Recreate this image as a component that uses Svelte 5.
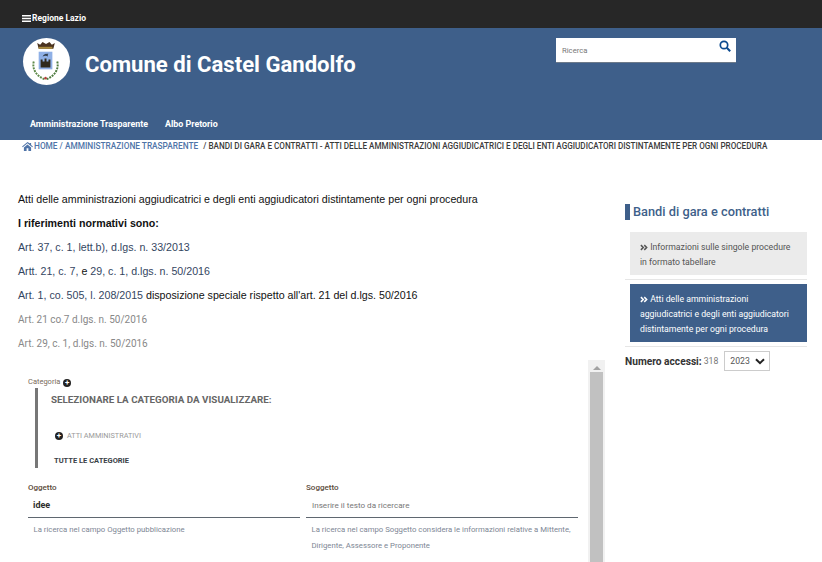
<script>
  const muted = ['Art. 21 co.7 d.lgs. n. 50/2016', 'Art. 29, c. 1, d.lgs. n. 50/2016'];
</script>

{#snippet chevrons()}
  <svg class="chev" viewBox="0 0 9 7" width="8" height="7"><path d="M1 .8l2.700 2.700L1 6.200M4.800 .8l2.700 2.700-2.700 2.700" fill="none" stroke="currentColor" stroke-width="1.700" /></svg>
{/snippet}

<div class="page">
  <div class="topbar">
    <a class="region" href="#top">
      <svg class="bars" viewBox="0 0 9 7" width="9" height="7"><path d="M0 0h9v1.400H0zM0 2.800h9v1.400H0zM0 5.600h9V7H0z" fill="#fff" /></svg>
      Regione Lazio
    </a>
  </div>

  <header class="head">
    <div class="brand">
      <div class="logo">
        <svg viewBox="0 0 48 48" width="47" height="47">
          <g transform="translate(-1 0)">
            <path d="M17 11l-1.500-6 3 2 2.500-3 3.500 2 3.500-2 2.500 3 3-2-1.500 6z" fill="#4a3320" />
            <rect x="17" y="9" width="14" height="2" fill="#a88a3e" />
            <rect x="17" y="14" width="14" height="18" fill="#8fb0e6" />
            <path d="M19 26v-4h2v2h2v-3h2v3h2v-2h2v4z M19 26h10v4H19z" fill="#2f2a1c" />
            <path d="M21 19c1-3 4-3 6-3-1 1-1 2 0 3-2-1-4-1-6 0z" fill="#33404f" />
            <path d="M12 24c-2 8 3 15 11 18" fill="none" stroke="#5e8a4a" stroke-width="2" stroke-dasharray="2 1" />
            <path d="M36 24c2 8-3 15-11 18" fill="none" stroke="#4d7a3e" stroke-width="2" stroke-dasharray="2 1" />
            <circle cx="24" cy="41" r="1.300" fill="#b5413b" />
          </g>
        </svg>
      </div>
      <h1>Comune di Castel Gandolfo</h1>
      <div class="search">
        <span class="placeholder">Ricerca</span>
        <svg viewBox="0 0 12 12" width="12" height="12"><circle cx="5" cy="5" r="3.700" fill="none" stroke="#0b4a8f" stroke-width="1.700" /><path d="M7.800 7.800l3.400 3.400" stroke="#0b4a8f" stroke-width="2" /></svg>
      </div>
    </div>
    <nav class="mainnav">
      <a href="#at">Amministrazione Trasparente</a>
      <a href="#ap">Albo Pretorio</a>
    </nav>
  </header>

  <div class="crumbs">
    <svg viewBox="0 0 12 10" width="11" height="9"><path d="M6 0L0 5l.7.8L6 1.500l5.300 4.300.7-.8-2-1.700V1H8.600v.7zM2 6v4h3V7h2v3h3V6L6 2.700z" fill="#4f74a8" /></svg>
    <span class="trail">HOME / AMMINISTRAZIONE TRASPARENTE</span>
    <span class="current">/ BANDI DI GARA E CONTRATTI - ATTI DELLE AMMINISTRAZIONI AGGIUDICATRICI E DEGLI ENTI AGGIUDICATORI DISTINTAMENTE PER OGNI PROCEDURA</span>
  </div>

  <div class="layout">
    <main class="content">
      <p>Atti delle amministrazioni aggiudicatrici e degli enti aggiudicatori distintamente per ogni procedura</p>
      <p><strong>I riferimenti normativi sono:</strong></p>
      <p class="link">Art. 37, c. 1, lett.b), d.lgs. n. 33/2013</p>
      <p><span class="link">Artt. 21, c. 7,</span> e <span class="link">29, c. 1, d.lgs. n. 50/2016</span></p>
      <p><span class="link">Art. 1, co. 505, l. 208/2015</span> disposizione speciale rispetto all'art. 21 del d.lgs. 50/2016</p>
      {#each muted as line}
        <p class="muted">{line}</p>
      {/each}

      <div class="frame">
        <div class="frame-body">
          <div class="cat-label">Categoria <span class="plus"></span></div>
          <div class="cat-box">
            <div class="cat-title">SELEZIONARE LA CATEGORIA DA VISUALIZZARE:</div>
            <div class="cat-item"><span class="plus"></span><span>ATTI AMMINISTRATIVI</span></div>
            <div class="cat-all">TUTTE LE CATEGORIE</div>
          </div>
          <div class="fields">
            <div class="field">
              <div class="field-label">Oggetto</div>
              <div class="field-input value">idee</div>
              <div class="field-help">La ricerca nel campo Oggetto pubblicazione</div>
            </div>
            <div class="field">
              <div class="field-label">Soggetto</div>
              <div class="field-input">Inserire il testo da ricercare</div>
              <div class="field-help">La ricerca nel campo Soggetto considera le informazioni relative a Mittente, Dirigente, Assessore e Proponente</div>
            </div>
          </div>
        </div>
        <div class="scrollbar">
          <span class="arrow"></span>
          <span class="thumb"></span>
        </div>
      </div>
    </main>

    <aside class="side">
      <h2>Bandi di gara e contratti</h2>
      <a class="side-link" href="#a">{@render chevrons()} Informazioni sulle singole procedure in formato tabellare</a>
      <a class="side-link active" href="#b">{@render chevrons()} Atti delle amministrazioni aggiudicatrici e degli enti aggiudicatori distintamente per ogni procedura</a>
      <div class="access">
        <strong>Numero accessi:</strong> <span>318</span>
        <div class="year">2023
          <svg viewBox="0 0 10 7" width="10" height="7"><path d="M1 1.200l4 4 4-4" fill="none" stroke="#222" stroke-width="2" /></svg>
        </div>
      </div>
    </aside>
  </div>
</div>

<style>
  :global(body) {
    margin: 0;
    background: #fff;
    overflow: hidden;
  }

  .page {
    width: 822px;
    height: 562px;
    overflow: hidden;
    font-family: Roboto, "Noto Sans", sans-serif;
    color: #333;
  }

  a {
    text-decoration: none;
    color: inherit;
  }

  .topbar {
    height: 28px;
    background: #272727;
    display: flex;
    align-items: flex-end;
    padding-left: 22px;
    box-sizing: border-box;
  }

  .region {
    color: #fff;
    font-size: 8.500px;
    font-weight: 700;
    line-height: 20px;
    height: 20px;
    display: flex;
    align-items: center;
    gap: 1px;
  }

  .head {
    height: 112px;
    background: #3e5f8a;
    color: #fff;
    display: flex;
    flex-direction: column;
    justify-content: space-between;
  }

  .brand {
    display: flex;
    padding: 10px 0 0 23px;
  }

  .logo {
    width: 47px;
    height: 47px;
    border-radius: 50%;
    background: #fff;
    overflow: hidden;
    flex: none;
  }

  h1 {
    margin: 0 0 0 15px;
    font-size: 22.100px;
    font-weight: 700;
    line-height: 52px;
    width: 471px;
    white-space: nowrap;
  }

  .search {
    width: 180px;
    height: 25px;
    background: #fff;
    display: flex;
    justify-content: space-between;
    box-sizing: border-box;
    padding: 2px 5px 0 6px;
    border-bottom: 1px solid #6d7a8a;
  }

  .placeholder {
    color: #777;
    font-size: 7.700px;
    line-height: 22px;
  }

  .mainnav {
    display: flex;
    gap: 17px;
    padding: 0 0 9px 30px;
    font-size: 8.900px;
    font-weight: 700;
    line-height: 14px;
  }

  .crumbs {
    height: 12px;
    padding-left: 22px;
    display: flex;
    align-items: center;
    gap: 1px;
    line-height: 12px;
    white-space: nowrap;
  }

  .trail {
    color: #4f74a8;
    font-size: 8.300px;
    font-weight: 500;
    margin-right: 4px;
  }

  .current {
    color: #3a3a3a;
    font-size: 8.150px;
    font-weight: 500;
  }

  .layout {
    display: flex;
    padding: 0 15px 0 18px;
  }

  .content {
    width: 587px;
    padding-top: 40px;
    font-family: "Liberation Sans", Arial, sans-serif;
    font-size: 10.670px;
    color: #111;
  }

  .content p {
    margin: 0 0 10px;
    line-height: 14px;
  }

  .content .link {
    color: #34465f;
  }

  .content .muted {
    font-family: Roboto, sans-serif;
    color: #888;
    font-size: 10px;
    position: relative;
    top: 1px;
  }

  .frame {
    display: flex;
    height: 202px;
    margin-top: 10px;
    font-family: Roboto, sans-serif;
  }

  .frame-body {
    flex: 1;
    padding: 15px 10px 0 10px;
  }

  .plus {
    display: inline-block;
    width: 8px;
    height: 8px;
    border-radius: 50%;
    background: #222;
    vertical-align: middle;
    position: relative;
  }

  .plus::after {
    content: "+";
    position: absolute;
    inset: 0;
    color: #fff;
    font-size: 8px;
    font-weight: 700;
    line-height: 8px;
    text-align: center;
  }

  .cat-label {
    font-size: 7.500px;
    color: #7a6b5a;
    line-height: 13px;
  }

  .cat-label .plus {
    margin-left: 1px;
    top: 1px;
  }

  .cat-box {
    margin-left: 7px;
    border-left: 3px solid #777;
    height: 80px;
    padding-left: 13px;
    box-sizing: border-box;
  }

  .cat-title {
    font-size: 9.800px;
    font-weight: 700;
    color: #666;
    line-height: 14px;
    padding-top: 5px;
  }

  .cat-item {
    margin-top: 23px;
    padding-left: 4px;
    font-size: 7.300px;
    color: #999;
    line-height: 12px;
    display: flex;
    align-items: center;
    gap: 4px;
  }

  .cat-all {
    margin-top: 14px;
    padding-left: 3px;
    font-size: 7.500px;
    font-weight: 700;
    color: #3a3f47;
    line-height: 10px;
  }

  .fields {
    display: grid;
    grid-template-columns: 272px 272px;
    gap: 6px;
    margin-top: 15px;
  }

  .field-label {
    font-size: 8px;
    font-weight: 500;
    color: #5a4a3a;
    line-height: 10px;
  }

  .field-input {
    font-size: 8.100px;
    color: #777;
    line-height: 14px;
    padding: 5px 6px 5px;
    border-bottom: 1px solid #5f6770;
  }

  .field-input.value {
    font-size: 9px;
    color: #2d2d2d;
    font-weight: 700;
    padding-left: 5px;
  }

  .field-help {
    font-size: 7.750px;
    color: #7d8694;
    line-height: 16px;
    padding: 4px 0 0 5.500px;
  }

  .scrollbar {
    width: 17px;
    background: #f1f1f1;
    display: flex;
    flex-direction: column;
    align-items: center;
    flex: none;
  }

  .arrow {
    margin: 6px 0 2px;
    width: 0;
    height: 0;
    border: 4px solid transparent;
    border-top: 0;
    border-bottom: 4px solid #a3a3a3;
  }

  .thumb {
    width: 13px;
    flex: 1;
    background: #c1c1c1;
  }

  .side {
    width: 182px;
    margin-left: 20px;
    padding-top: 52px;
    font-size: 8.700px;
  }

  h2 {
    margin: 0 0 12px;
    border-left: 5px solid #3e5f8a;
    padding-left: 3px;
    font-size: 12.800px;
    font-weight: 500;
    line-height: 16px;
    color: #3e5f8a;
  }

  .side-link {
    display: block;
    margin-left: 5px;
    padding: 8px 10px 5px;
    line-height: 15px;
    color: #555;
    background: #ebebeb;
    position: relative;
  }

  .side-link::after {
    content: "";
    position: absolute;
    left: -5px;
    right: 0;
    bottom: -5px;
    border-bottom: 1px solid #e6e6e6;
  }

  .side-link + .side-link {
    margin-top: 9px;
  }

  .side-link.active {
    background: #3e5f8a;
    color: #fff;
  }

  .chev {
    vertical-align: -0.5px;
  }

  .access {
    margin-top: 9px;
    display: flex;
    align-items: center;
    gap: 2px;
    color: #777;
  }

  .access strong {
    color: #333;
    font-size: 10.200px;
  }

  .year {
    margin-left: 4px;
    width: 46px;
    height: 20px;
    border: 1px solid #ccc;
    box-sizing: border-box;
    display: flex;
    align-items: center;
    justify-content: space-between;
    padding: 0 4px 0 5px;
    color: #555;
  }
</style>
